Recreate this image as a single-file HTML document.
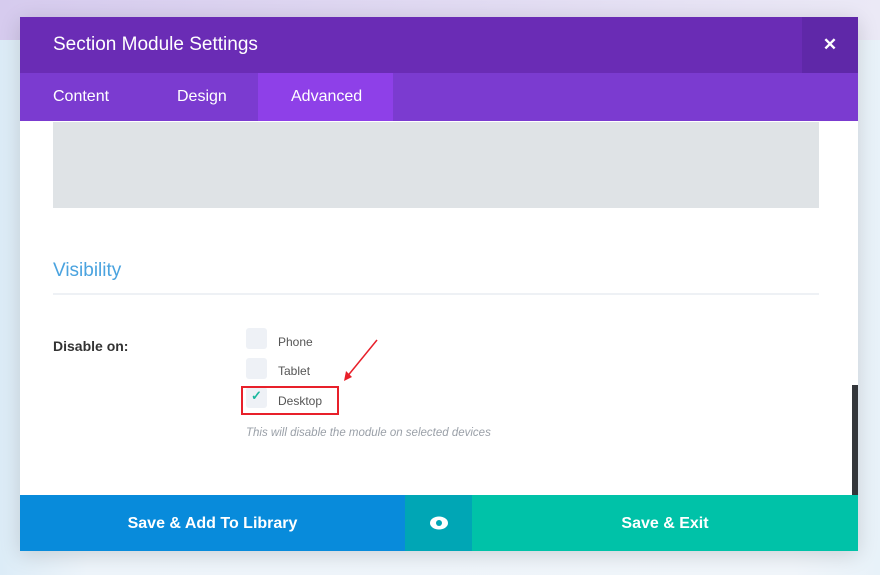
<!DOCTYPE html>
<html><head><style>
body{margin:0;width:880px;height:575px;overflow:hidden;background:linear-gradient(90deg,#dcecf7,#eef5fb 10%,#f1f6fb 90%,#e8f2f9);font-family:"Liberation Sans",sans-serif;position:relative}
.top{position:absolute;left:0;top:0;width:880px;height:40px;background:linear-gradient(90deg,#d6cbee,#ebe9f6)}
.m{position:absolute;left:20px;top:17px;width:838px;height:534px;background:#fff;box-shadow:0 4px 20px rgba(0,0,0,.15)}
.hd{height:56px;background:#6a2cb5;position:relative;color:#fff;font-size:19px;line-height:56px;padding-left:33px}
.x{position:absolute;right:0;top:0;width:56px;height:56px;background:#5f28a8;text-align:center;font-weight:bold;font-size:17px}
.tabs{height:48px;background:#7b3bd0;position:relative;color:#fff;font-size:16px}
.tabs span{position:absolute;top:0;line-height:48px}
.act{position:absolute;left:238px;width:135px;height:48px;background:#8e40e8}
.ta{position:absolute;left:33px;top:105px;width:766px;height:86px;background:#dfe3e6}
.vis{position:absolute;left:33px;top:243px;font-size:19px;color:#4aa3df}
.hr{position:absolute;left:33px;top:276px;width:766px;height:2px;background:#eef1f5}
.lbl{position:absolute;left:33px;top:321px;font-size:14px;font-weight:bold;color:#333}
.cb{position:absolute;left:226px;width:21px;height:21px;background:#eef1f6;border-radius:3px}
.ct{position:absolute;left:258px;font-size:12px;color:#555}
.hint{position:absolute;left:226px;top:410px;font-size:11.5px;font-style:italic;color:#9aa0a8}
.ft{position:absolute;left:0;top:478px;height:56px;width:838px;overflow:hidden;color:#fff;font-size:16px;font-weight:bold;line-height:58px;text-align:center}
.ft>div{height:56px}
</style></head><body>
<div class="top"></div>
<div class="m">
<div class="hd">Section Module Settings<div class="x">✕</div></div>
<div class="tabs"><div class="act"></div><span style="left:33px">Content</span><span style="left:157px">Design</span><span style="left:271px">Advanced</span></div>
<div class="ta"></div>
<div class="vis">Visibility</div>
<div class="hr"></div>
<div class="lbl">Disable on:</div>
<div class="cb" style="top:311px"></div><div class="ct" style="top:318px">Phone</div>
<div class="cb" style="top:341px"></div><div class="ct" style="top:347px">Tablet</div>
<div class="cb" style="top:370px;color:#1bb89e;font-size:13px;text-align:center;line-height:18px;font-weight:bold">✓</div><div class="ct" style="top:377px">Desktop</div>
<div style="position:absolute;left:221px;top:369px;width:94px;height:25px;border:2px solid #e8202a"></div>
<svg style="position:absolute;left:320px;top:320px" width="40" height="45"><path d="M37 3 L6 41" stroke="#e8202a" stroke-width="1.5"/><path d="M4 44 L6 34 L12 40 Z" fill="#e8202a"/></svg>
<div class="hint">This will disable the module on selected devices</div>
<div style="position:absolute;left:832px;top:368px;width:6px;height:110px;background:#33363a"></div>
<div class="ft"><div style="position:absolute;left:0;width:385px;background:#088bdb">Save &amp; Add To Library</div><div style="position:absolute;left:385px;width:67px;background:#00a6b5;line-height:0"><svg width="20" height="14" style="margin-top:21px" viewBox="0 0 20 14"><ellipse cx="10" cy="7" rx="9" ry="6.5" fill="#fff"/><circle cx="10" cy="7" r="3" fill="#00a6b5"/></svg></div><div style="position:absolute;left:452px;width:386px;background:#00c2a8">Save &amp; Exit</div></div>
</div>
</body></html>
